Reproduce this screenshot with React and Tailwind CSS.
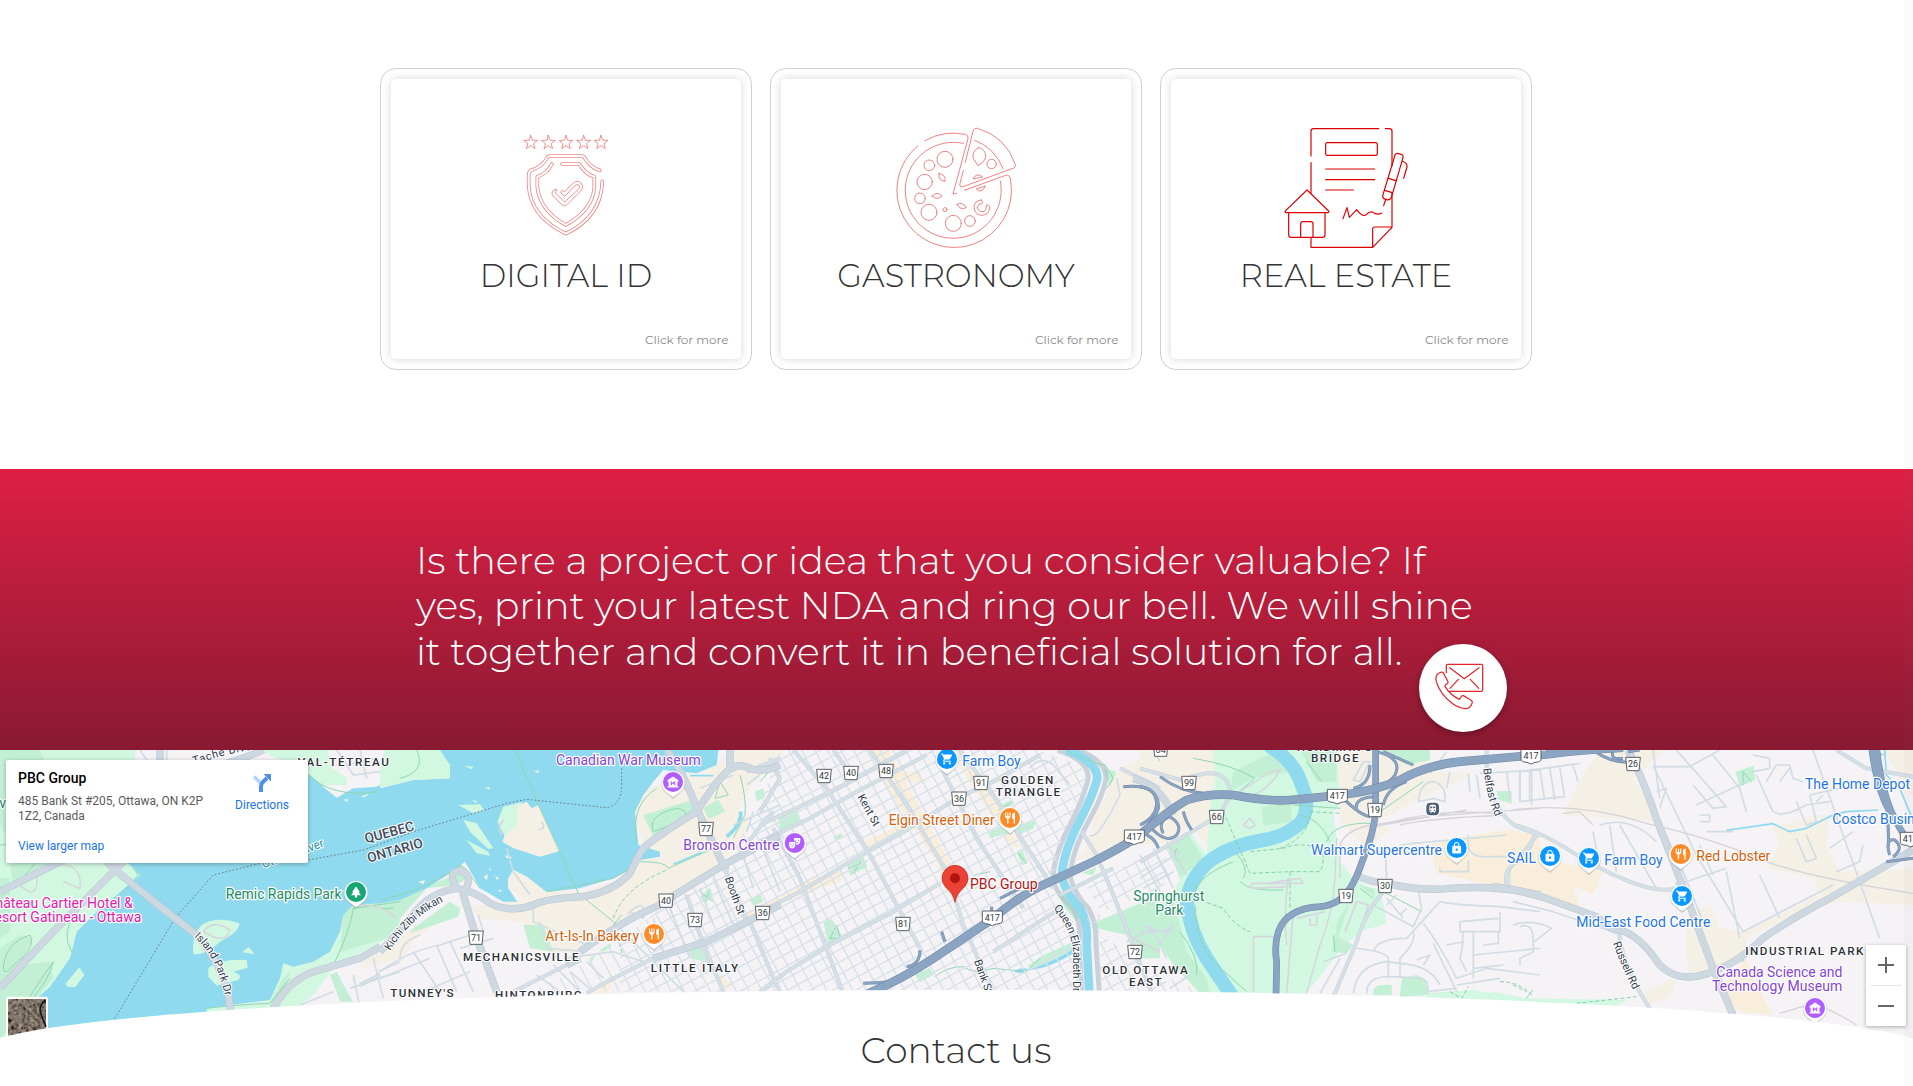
import React from 'react';
import { MdShoppingCart, MdRestaurant, MdMuseum, MdTheaterComedy, MdPark, MdTrain, MdLock } from 'react-icons/md';

/* ---------- service icons ---------- */

const star = (cx) => {
  let d = '';
  for (let i = 0; i < 10; i++) {
    const r = i % 2 ? 9 : 22;
    const a = (-90 + i * 36) * (Math.PI / 180);
    d += `${i ? 'L' : 'M'}${(cx + r * Math.cos(a)).toFixed(1)} ${(248 + r * Math.sin(a)).toFixed(1)}`;
  }
  return d + 'Z';
};

function ShieldIcon() {
  const shapes = [
    'M689 331Q660 322 643 292Q640 288 636 288H541Q534 288 531 294Q516 322 482 331Q477 334 476 345V375Q480 470 588 521Q694 470 697 364',
    'M546 312Q530 342 502 350V380Q508 450 587 495Q668 450 673 382V350Q645 342 628 312H576',
  ];
  return (
    <svg viewBox="408 204 360 360" className="block size-[120px] overflow-visible" fill="none" strokeLinejoin="round" strokeLinecap="round">
      {[482, 535, 588, 641, 693].map((x) => <path key={x} d={star(x)} stroke="#ee8080" strokeWidth="2.6" />)}
      {shapes.map((d) => (
        <g key={d}>
          <path d={d} stroke="#ef8686" strokeWidth="11" />
          <path d={d} stroke="#fff" strokeWidth="6" />
        </g>
      ))}
      <path d="M559 389Q552 385 547 396Q544 402 549 407L575 434Q583 441 591 434L635 390Q642 380 634 370Q622 358 610 369L584 395L577 391Q570 395 573 399L584 409L614 378Q621 370 627 376Q633 381 626 387L584 426L556 399Q560 394 559 389Z" stroke="#ee8080" strokeWidth="2.6" />
    </svg>
  );
}

function PizzaIcon() {
  return (
    <svg viewBox="409 204 360 360" className="block size-[120px] overflow-visible" fill="none" stroke="#ec7474" strokeWidth="2.7" strokeLinecap="round" strokeLinejoin="round">
      <path d="M475 257A172 172 0 1 0 753 362Q752 343 738 346L614 391M496 242Q550 210 618 223Q627 226 625 236L580 402L590 400" />
      <path d="M611 250A144 144 0 1 0 722 363" />
      <path d="M617 307L640 214Q643 203 654 205Q740 231 767 314Q769 321 762 324L610 380Q598 382 601 370L611 332" />
      <path d="M645 241Q704 262 731 327" />
      <circle cx="556" cy="298" r="24" /><circle cx="509" cy="316" r="16" /><circle cx="495" cy="366" r="23" />
      <circle cx="481" cy="415" r="16" /><circle cx="508" cy="457" r="24" /><circle cx="581" cy="490" r="24" />
      <circle cx="631" cy="483" r="16" /><circle cx="696" cy="312" r="14" /><circle cx="556" cy="449" r="6" />
      <path d="M656 263Q635 275 641 296L655 317Q684 300 677 280Q670 263 656 263ZM538 340Q560 345 556 364Q535 362 538 340ZM517 408Q533 392 547 408Q533 422 517 408ZM592 433Q610 424 620 443Q602 452 592 433Z" />
      <path d="M641 356Q650 336 668 350ZM651 388Q664 403 677 379ZM665 420Q642 422 643 444Q647 466 667 466Q690 464 690 440Q686 430 679 437Q682 455 667 455Q653 453 653 441Q655 431 667 431Q671 424 665 420Z" />
    </svg>
  );
}

function EstateIcon() {
  return (
    <svg viewBox="408 204 360 360" className="block size-[120px] overflow-visible" fill="none" stroke="#dd0000" strokeWidth="3.6" strokeLinecap="round" strokeLinejoin="round">
      <path d="M483 288V214Q483 206 491 206H686M706 206H718Q726 206 726 214V318M726 398V502L668 562H483V533M483 308V400M726 501H674Q668 501 668 507V562" />
      <rect x="527" y="248" width="155" height="38" rx="5" />
      <path d="M527 327H674M527 359H674M527 390H610" />
      <path d="M471 390L536 453Q538 458 532 458H409Q403 457 407 452ZM416 458V524Q416 532 424 532H517Q525 532 525 524V458M452 532V492Q452 485 459 485H482Q489 485 489 492V532" />
      <path d="M579 476L591 443L598 472L620 449Q640 477 653 460Q665 451 674 460Q685 465 695 459" />
      <path d="M743 280L756 284Q761 287 759 293L724 413Q718 422 710 419L702 416Q696 411 699 404L735 285Q738 279 743 280ZM716 355L737 362M704 391L727 398M707 418L701 437M756 303Q773 309 771 321L761 355" />
    </svg>
  );
}

function ContactIcon() {
  return (
    <svg viewBox="0 0 264 264" className="absolute inset-0 size-[88px]" fill="none" stroke="#e8272c" strokeWidth="3.8" strokeLinecap="round" strokeLinejoin="round">
      <g transform="translate(-27 -27)">
        <path d="M109 113V92Q109 88 113 88H214Q218 88 218 92V164Q218 169 213 169H117M119 98L163 131L207 98M145 133L120 160M181 133L206 160" />
        <path d="M99 112Q91 110 85 116Q75 122 79 140Q90 177 126 205Q145 219 165 221Q180 222 185 207Q190 200 182 195L160 182Q155 181 153 186L148 193Q121 180 107 157Q103 153 108 148Q117 145 113 138Z" />
      </g>
    </svg>
  );
}

/* ---------- map ---------- */

const OFFSET = { A: 0, B: 1140, C: 2280, D: 3420, E: 4539 };
const SHEETS = Object.keys(OFFSET);

// One style applied to the outlines of every map sheet.
function Layer({ A, B, C, D, E, ...rest }) {
  const data = { A, B, C, D, E };
  return (
    <g fill="none" strokeLinejoin="round" {...rest}>
      {SHEETS.filter((k) => data[k]).map((k) => <path key={k} d={data[k]} transform={`translate(${OFFSET[k]} 0)`} />)}
    </g>
  );
}

function Sheet({ k, children }) {
  return <g transform={`translate(${OFFSET[k]} 0)`}>{children}</g>;
}

function Road({ edge, fill, w, ...paths }) {
  return (
    <>
      <Layer {...paths} stroke={edge} strokeWidth={w + 3} />
      <Layer {...paths} stroke={fill} strokeWidth={w} />
    </>
  );
}

const PARK = '#228b62';
const SHOP = '#2474e5';
const FOOD = '#d4610c';
const CULT = '#8544d4';

function Poi({ x, y, w, c, children, end }) {
  return (
    <text x={x} y={y} textLength={w} textAnchor={end ? 'end' : 'start'} fill={c} fontSize="42" stroke="#fff" strokeWidth="7" strokeLinejoin="round" paintOrder="stroke">{children}</text>
  );
}

function Area({ x, y, w, children }) {
  return (
    <text x={x} y={y} textLength={w} fill="#2c3038" fontSize="35" fontWeight="500" stroke="#fff" strokeWidth="6" strokeLinejoin="round" paintOrder="stroke">{children}</text>
  );
}

function Street({ id, d, w, children, size = 33, c = '#2f3a4e' }) {
  return (
    <>
      <path id={id} d={d} fill="none" />
      <text fill={c} fontSize={size} stroke="#fff" strokeWidth="6" strokeLinejoin="round" paintOrder="stroke">
        <textPath href={`#${id}`} textLength={w}>{children}</textPath>
      </text>
    </>
  );
}

function Shield({ x, y, n, wide }) {
  const h = wide ? 30 : 22;
  return (
    <g transform={`translate(${x} ${y})`}>
      <path d={wide ? `M${-h} -20H${h}V10Q${h} 18 12 19L0 24L-12 19Q${-h} 18 ${-h} 10Z` : 'M-22 -20H22L18 20H-18Z'} fill="#fff" stroke="#5c5f66" strokeWidth="3" strokeLinejoin="round" />
      <text y="10" textAnchor="middle" fontSize="27" fill="#33373d">{n}</text>
    </g>
  );
}

function Pin({ x, y, c, Icon }) {
  return (
    <g transform={`translate(${x} ${y})`}>
      <path d="M0 48L-22 29A36 36 0 1 1 22 29Z" fill="#8a929c" opacity=".45" transform="translate(0 3)" />
      <path d="M0 46L-22 29A35 35 0 1 1 22 29Z" fill="#fff" />
      <circle r="30" fill={c} />
      <Icon x="-20" y="-20" size="40" color="#fff" />
    </g>
  );
}

// Parallel streets of the downtown grid, cut to the built-up area.
const GRID = (() => {
  let d = '';
  for (let i = -30; i < 44; i++) {
    const x = i * 39;
    d += `M${x} 0L${x + 430} 800`;
  }
  for (let i = -3; i < 42; i++) {
    const y = i * 37;
    d += `M-420 ${y + 232}L1220 ${y - 660}`;
  }
  return d;
})();

function CityMap() {
  return (
    <svg viewBox="0 15 5739 870" className="block h-[290px] w-full" fontFamily="Roboto, sans-serif" role="img" aria-label="Map of Ottawa">
      <defs>
        <clipPath id="downtown"><path d="M-690 740L-600 700-440 600-270 470-110 370 0 180 60 15H830L960 60 980 100 900 300 880 420 900 480 950 540 960 740Z" /></clipPath>
        <clipPath id="east"><path d="M980 420L1140 340 1240 290 1260 370 1200 430 980 520 1010 560 1200 690 1330 740H1020V500Z" /></clipPath>
        <filter id="terrain" x="0" y="0" width="1" height="1">
          <feTurbulence type="fractalNoise" baseFrequency=".09" numOctaves="4" seed="7" />
          <feColorMatrix values=".5 .3 0 0 -.2 .45 .3 0 0 -.21 .36 .3 0 0 -.2 0 0 0 0 1" />
        </filter>
      </defs>
      <rect y="15" width="5739" height="870" fill="#f5f3f5" />

      {/* land cover */}
      <Layer fill="#f5f0e6"
        B="M-60 660L100 545 240 480 330 480 500 450 600 440 760 390 790 300 760 200 790 140 850 110 870 75 960 90 1010 60 1050 15H1200V50L1120 110 1080 190 1110 250 1030 350 900 435 830 480 700 560 600 610 600 625 500 620 430 530 300 520 260 480 200 510 100 590 60 660 0 730-60 740Z"
        C="M0 15H70V30L0 50ZM970 320L1010 200 1080 70 1200 15V250L1010 330 940 350Z"
        D="M0 15H225L230 100 210 310 150 240 100 290 0 300ZM590 15H870V80L1000 85 820 170 700 240 760 250 680 310 600 230Z"
        E="M260 15H460L360 100 400 160 440 230 150 210 210 90ZM780 250L900 210H950L940 300 980 380 1200 370V480L980 470 860 500 700 580 690 650 600 690 530 700 515 600 530 500 590 480 620 550 700 560 920 450 900 400 760 370 800 290ZM1110 15L1200 160V15ZM380 750L500 690 470 760 400 780Z" />
      <Layer fill="#f8eedb"
        B="M1090 510L1200 470V490L1110 530 1150 600 1100 520ZM1020 690L1060 720 1030 745ZM650 745L690 690 700 710 680 745Z"
        C="M0 485L90 440 150 400 250 380 240 410 120 450 0 510ZM330 15H385L420 80 480 80 490 110 440 110 480 190 560 330 600 430 560 450 530 350 380 130ZM540 15H610L720 190 780 310 750 300 590 50ZM310 290L420 240 430 255 330 320Z"
        D="M865 300L1000 270 1100 255 1200 270V430L1050 420 890 385Z"
        E="M-60 260L0 255 60 270 40 320 90 340 270 380 240 450 180 420 200 490 0 430-60 420ZM620 730L700 640 720 700 780 810 680 800Z" />
      <Layer fill="#d2f8e2"
        A="M0 15H420V100L350 90 390 350 420 390 350 450 290 500 230 560 210 640 150 725 110 760 140 880H0ZM780 15H1040V120L960 120 924 85ZM1200 470L1130 470 1060 480 1030 510 1020 560 990 620 940 650 880 665 850 655 840 700 810 765 690 780 620 790V820H890L1000 670 1200 560Z"
        D="M220 15H590L600 180 580 200 600 350 640 400 690 430 720 430 740 535 660 560 590 630 500 745H180L100 640 60 560 100 440 130 380 100 290 150 260 200 330 210 200 225 100ZM860 745L1000 735 1200 770H860Z"
        E="M-60 740L40 760 340 765 300 790-60 780Z" />
      <Layer fill="#c3f0d5"
        A="M0 15H120L140 60 30 290 0 240ZM30 350L190 345 160 370 40 430ZM0 610L60 570 100 580 60 660 150 650 160 700 110 760 0 880ZM0 400H30V560L0 580ZM1200 470L1130 470 1060 480 1030 510 1020 620 1160 580 1200 530ZM990 690L1020 770H1060L1010 680ZM810 770L850 700 870 680 860 720 820 780Z"
        B="M0 470L60 460 210 395 240 350 270 395 230 420 140 430 0 590ZM100 550L210 470 240 490 235 515 90 565ZM430 540L490 540 520 620 450 610ZM790 210L935 165 945 200 820 275ZM970 190L1015 163 1035 200 985 222ZM960 455L990 428 1000 455 975 475ZM1110 465L1140 445 1150 470 1120 482ZM930 615L975 600 990 655 935 640ZM1125 140L1150 130 1155 155 1130 170ZM660 615L690 595 695 605 665 622ZM630 640L650 625 630 660Z"
        C="M55 215L115 195 120 240 60 255ZM260 355L310 335 322 365 270 392ZM190 530L215 522 248 575 205 600ZM685 262L735 240 745 265 690 280ZM770 240L830 225 820 250 775 270ZM715 185L760 160 750 185ZM770 320L785 312 803 355 785 360ZM465 690L510 668 520 690 480 712ZM800 665L850 630 940 590 945 610 830 670ZM1030 70L1070 80 1050 125ZM1010 530L1140 475 1200 470V640L1140 640 1100 570 1010 550ZM965 385L1010 365 1000 390ZM895 450L920 450 960 500 950 530 915 490ZM220 275L245 265 248 275 225 285Z"
        D="M280 80L410 15 450 80 340 100 270 140ZM365 185L455 175V230L370 242ZM480 15H590V110L530 110ZM590 530L630 470 580 620ZM0 480L90 440 120 540 140 620 200 700 210 745 180 745 100 660 60 600 0 640ZM80 300L140 260 190 340 120 400ZM720 15H870V45L800 60ZM1070 138H1115V175L1075 165ZM700 740Q700 715 755 720V750H700ZM780 755L785 700 830 690Q865 700 862 750ZM585 570L640 600 620 625 575 620ZM655 420L700 430 705 455Z"
        E="M668 80L722 62 727 105 680 125Z" />
      <Layer fill="#f4f2f5" A="M405 15H520V45H405ZM985 15H1130L1137 100 1060 112 990 65ZM890 790L950 740 1000 715 1020 770ZM1020 700L1060 680 1200 640V790L1070 790Z" />

      {/* water and islands */}
      <Layer fill="#8fdaee"
        A="M924 85L975 130 1010 158 1060 130 1130 125 1141 120V475L1060 480 1030 510 1020 560 990 620 940 650 880 665 850 655 840 700 810 765 690 780 620 790V860H140L110 760 150 725 210 640 230 560 290 500 350 450 420 390 380 350 350 90Z"
        B="M0 130L100 105 210 100 205 60 160 40 180 15H1015L1010 60 950 85 850 75 820 110 790 150 765 200 775 300 840 320 840 335 780 345 760 370 700 400 600 430 500 442 440 395 400 375 385 400 385 430 412 470 370 470 300 430 255 350 210 385 140 430 60 465 0 475Z"
        C="M762 680Q780 665 805 672Q850 665 940 612L945 622Q870 670 810 675Q780 690 762 680Z" />
      <Layer fill="#d2f8e2"
        A="M600 545Q640 510 718 535Q720 560 660 590Q620 630 580 628Q575 570 600 545ZM625 670Q660 640 740 645L743 668 700 680Q730 690 715 705L650 722 625 695ZM198 715L238 667 253 690 225 727 200 725ZM727 622L745 606 765 628ZM1030 165L1043 160V172ZM1080 155L1110 145 1095 157Z"
        B="M235 180L300 178 312 195 280 205ZM250 225L290 235 340 310 325 312 270 260ZM260 285L325 320 330 332 290 325ZM370 185L425 172 410 240 375 275 352 230ZM315 128L330 126 328 135ZM252 62L280 65 275 73ZM275 165L292 168 288 175ZM15 15H180L210 60V100L100 105 0 130V60Z" />
      <Layer fill="#f5f0e6"
        B="M415 180L440 170 455 190 475 180 540 318 480 335 400 310 367 290 375 270 410 240ZM400 375L440 395 500 442 600 435 500 462 450 470 385 430 385 400ZM115 410L135 405 130 418ZM462 78L477 76 475 85ZM310 395L325 388 320 405ZM325 372L332 370V378ZM355 435L368 435 360 442ZM375 330L400 338 380 340ZM345 392L358 400 350 404Z" />
      <Layer stroke="#a9b6c6" strokeWidth="15" C="M893 15Q985 45 985 100Q970 160 935 230Q885 320 878 400Q885 440 940 495Q965 530 957 600L965 740M955 15Q1040 50 1038 100Q1030 150 985 230Q935 320 930 395Q945 450 985 490Q1010 530 1008 600L1018 740" opacity=".55" />
      <Layer stroke="#8fdaee" strokeWidth="26" C="M920 15Q1012 50 1012 100Q1000 150 960 225Q910 320 905 395Q920 450 960 490Q985 530 980 600L988 745" />
      <Layer stroke="#8fdaee" strokeWidth="42" D="M385 0Q465 50 485 120Q512 180 485 230Q440 275 370 285Q280 300 220 340Q150 390 140 470Q150 560 200 640Q240 700 278 755" />
      <Layer stroke="#8fdaee" strokeWidth="5" B="M930 92H1000M880 358L965 322" E="M640 256L780 236 830 260 880 250 960 210 1000 200 1095 195M1115 15L1120 90 1160 130 1200 225M1080 25L1120 30" />
      <Layer stroke="#8fdaee" strokeWidth="11" B="M1082 200Q1085 240 1040 275" />

      {/* trails, borders and rail */}
      <Layer stroke="#8fd6b3" strokeWidth="3"
        A="M0 300Q80 290 110 350L50 420M10 660Q20 590 90 570Q110 610 40 660Q10 700 10 660ZM230 500Q180 560 215 620M30 860Q80 760 160 650Q150 700 90 770M400 370L415 390 350 460M1000 660Q1050 560 1060 490L1200 470M620 790Q700 780 810 775L870 700M925 90Q1000 160 1130 140"
        B="M0 465Q120 440 215 380Q245 340 270 390L300 430M405 15L480 190 595 445 700 530 910 740M770 290Q750 180 830 130M780 350Q860 350 865 370L1000 310M500 440L700 400 775 355M1020 110L1045 150 1005 160ZM1080 90Q1100 160 1095 210L1060 280M820 260Q800 210 890 190Q940 200 900 230ZM960 440L1000 470M990 435L975 470M700 540L725 510M0 490H40M110 15Q140 80 60 100"
        C="M525 695Q560 665 610 665Q640 690 700 670L800 680 840 640M915 15Q1010 60 1035 60L1060 100 1040 130M210 580L230 540 240 580ZM265 370L318 350M280 385L305 345M0 60L40 65 0 110M645 390L690 380M715 195L760 170M775 325L800 355M940 560V620"
        D="M160 40Q280 60 345 100L250 180M300 410Q330 440 430 435M285 320Q330 370 310 400M160 480Q150 400 280 350M165 480Q170 600 220 650L320 740M570 290Q540 220 480 210M460 180L600 190M110 310Q95 340 120 350M120 560Q180 640 170 690M730 440L845 500M500 50L545 110M580 570L585 620M720 200L850 110M660 430L700 460M560 290Q580 230 700 235"
        E="M40 760L60 735M690 120V80L715 110M690 620V650" />
      <Layer stroke="#86cfae" strokeWidth="3" strokeDasharray="12 7"
        B="M700 520Q730 430 860 375M700 540L730 635"
        D="M250 200L330 385 450 380H540Q560 340 540 310Q480 290 430 310L330 320M420 310Q500 280 510 210M450 380V490M165 460L250 490Q280 540 330 560M1080 710Q1140 710 1180 755M510 200L600 205M930 740L965 760 985 725"
        E="M0 720L40 740M190 775L370 755" />
      <Layer stroke="#6e7f8c" strokeWidth="3" strokeDasharray="5 6" A="M345 820L525 520 640 390 780 355 924 345 1090 315 1141 297" B="M0 297L100 260 380 175 440 163 680 188Q725 180 725 120V60" />
      <Layer stroke="#d6d3d9" strokeWidth="4" D="M590 280L585 400Q580 500 540 600L500 745M600 400V300Q620 250 700 240L860 215 1200 190M740 235Q900 190 1060 205M700 245L980 195M780 240Q860 220 1100 210M440 600Q430 500 445 400" E="M0 195Q200 170 400 235Q600 280 760 350Q900 400 1200 445M150 205L200 200 240 240M800 805L900 775Q970 800 1030 840" A="M60 420Q120 480 110 370M160 360Q250 350 240 430L190 410" />
      <Layer stroke="#d8d5df" strokeWidth="5" D="M340 575L340 745M335 415H380L480 400 490 415H340Q320 430 345 430L440 425M340 575H415M460 500L440 745M470 520L555 500M510 520V540H530V505M615 560L650 470 685 480 660 560M310 240L330 220 345 240 330 250ZM270 160Q330 120 390 80L420 75Q390 130 340 150" C="M1100 590L1180 550M1110 575L1200 620" A="M610 560Q640 520 690 555Q680 590 640 575ZM1080 480Q1150 480 1190 520" B="M485 230Q500 250 475 255M365 270Q350 240 372 225" />

      {/* minor streets */}
      <g transform="translate(2280 0)" fill="none" stroke="#d7e1e8" strokeWidth="4">
        <g clipPath="url(#downtown)"><path d={GRID} /></g>
        <g clipPath="url(#east)"><path d={GRID} /></g>
      </g>
      <Layer stroke="#d1dce4" strokeWidth="5"
        A="M500 15V45M420 15L440 45M1010 15L1060 90 1140 80M1080 15L1100 100M1040 60L1130 40M1060 690L1080 790M1120 640L1150 760M1050 730L1200 680M1135 680L1200 650M900 780L1000 740"
        B="M0 680Q80 620 180 600L300 560M60 640Q60 590 120 570M270 500L360 740M295 510L310 560M100 620L180 740M170 600L230 740M210 590L280 740M240 610L340 580M0 700L150 640M130 740L270 680M480 530L500 610 620 620M460 470V530L620 600M550 640L700 620 790 650M570 680L640 740M520 660L600 740M620 650L670 700M470 690L540 740M820 520L850 620M870 490L930 640M960 430L1000 540M1000 400L1060 540M1140 290L1200 440M1090 330L1120 430M380 310L400 380 450 450M1100 120L1140 90M1120 200L1100 260M740 510Q800 450 790 520L750 500M1060 240L1200 180M960 130L1060 90"
        C="M990 270Q1010 290 1080 150L1070 100M810 70Q840 30 880 60L930 120M1180 15L1200 50"
        D="M0 350L130 280M0 400L120 320M10 430L100 380M0 330L60 440M40 310L100 430M80 290L140 390M10 545L70 560 100 540 60 600M0 560H100M30 540L80 640M90 730L150 690M640 105L670 50 690 50 660 110ZM780 300L820 295 1100 270M735 300L740 400M985 270V310Q1000 340 1050 335H1100M900 380H985V345M900 370V382M835 170Q840 110 880 110Q920 120 915 170L880 160ZM1020 85L1200 75M1100 80L1110 165M1140 75V170M1175 70V180M985 85L990 140M1010 90L1020 160M930 80L920 130M870 85L920 20M640 745Q650 660 740 650L780 655Q870 660 900 720M680 745Q680 690 760 695L845 700Q870 710 862 745M745 700V640Q740 620 650 610M780 695V640Q830 590 820 560M700 620Q710 580 800 580L900 470Q940 480 1080 485L1200 500M700 480L820 545 845 490 835 440M740 460L790 520M770 450L740 480M800 490L780 510M850 535Q900 600 950 700M880 595L950 740M920 600L970 590 960 640 980 680M960 530V560H1080V500M960 530L1075 520M970 560L965 620M1000 560V700M1000 630L1200 610M1030 600L1075 595V560M1000 670L1090 660M950 700L1040 670 1200 690M950 720L1080 700M1140 545Q1180 530 1180 590V620L1140 640V660M860 740L950 730M830 645L870 630 850 660M1110 420Q1100 360 1140 350M550 650L620 625M540 745L600 640"
        E="M20 80V170M50 75V170M80 70L95 165M110 65L125 165M140 62L155 160M180 60L195 110M20 170L150 155M20 80L200 55M420 65H530L620 15M420 60L550 330M490 15L640 185 600 190 540 120M550 180L700 110M600 30L680 130 700 200M720 80L770 70 770 40 720 30M730 90L780 200Q810 220 880 180L950 170M760 110L790 60H830L840 100 870 110M800 110L830 70M850 170L880 240 910 230 890 150M900 15L1100 580M890 150L980 130M910 170L930 150M580 260H660M560 210H590V230H560M550 330L690 560 960 420M490 330L570 530M490 420L640 370M560 300L600 390M640 380L680 580M740 390L800 520M430 210L520 400M850 280L880 350 910 340 880 270M950 310L1020 260M970 380L1040 350 1050 300M260 240Q350 210 430 290M240 260L260 370M290 240L310 380M320 240L430 430M420 15L440 160M430 140L460 130 440 190M0 470L120 500 300 560M0 540Q60 520 115 550Q90 570 65 590 60 570M60 590L240 600 300 570M15 540V600L50 640 30 660M90 655H300M60 740L85 655M120 740L140 640M190 740L200 635M250 740L280 630M50 740L320 720M40 760H300M160 530L170 570 250 560M200 490L430 570M270 430L440 500 400 540M250 450L350 500M330 660L400 750M370 620L410 680 380 690M410 740L460 710 480 740 430 765M830 540L1000 780 1060 770M870 510L940 610M920 510L1010 600 1000 520M960 490L1050 610M1060 480L1140 570 1040 600M1100 480L1150 560M820 600L900 560M560 690L580 660M690 650L830 560 1050 470M550 800L600 770 640 775M580 790L590 810M1160 60V15M1160 60L1200 30M1140 430V460" />

      {/* arterials */}
      <Road edge="#c6d1dc" fill="#d5dfe6" w={9}
        B="M560 660L400 740M-60 720L0 690M920 450L960 570 1030 740M1110 530L1180 700 1200 740M1040 350V380M1000 300L1060 430 1100 530M1100 300Q1140 240 1180 200M620 745L680 710 820 640M1100 80L1200 40"
        C="M0 240L130 180 250 120 440 15M0 290L150 220 290 140 500 30M0 500L120 440 270 350 440 255 590 160 700 110 840 30M0 740L80 680 210 600 400 500 540 415M40 250L120 400 250 745M100 15L200 130 330 330 480 610M330 15L440 180 560 380 610 540 700 745M550 80L650 280 790 490M600 15L720 180 880 430M965 260L1010 330 1060 450 1175 745M220 15L280 100M0 200L60 100 30 40M900 450L1060 370M700 620L900 490M1080 70L1200 130"
        D="M0 350L240 210 270 150Q270 80 200 85L150 95M0 70L140 110M740 430Q680 490 650 590L580 755M1040 15V90Q1060 200 1130 245L1200 270M1100 420Q1090 370 1130 350L1190 270"
        E="M0 240Q60 250 160 310Q250 370 350 410Q440 445 490 430M65 270L45 320M320 560V590Q350 700 410 790M970 15L1060 70 1200 95M490 420L510 400" />
      <Road edge="#b9c5d2" fill="#cdd8e1" w={19}
        A="M0 730L150 570 345 375 400 320M0 440L180 350 290 300M320 350L345 375 500 500 590 570Q680 670 692 800M815 800Q860 710 940 680L1080 640 1141 605M480 15V45M660 60Q720 45 790 15"
        B="M0 620Q60 560 110 495Q160 440 230 430Q290 440 330 475Q390 505 460 480Q500 460 610 455Q700 440 750 385Q770 340 790 310Q820 280 950 200Q1000 120 1040 80Q1070 50 1110 70Q1150 85 1200 60M230 430Q200 380 240 378Q285 385 250 450L290 580 350 740M860 15Q910 80 950 190L1030 360M600 620Q740 520 830 485L900 440 1040 355 1200 270M560 660L600 640M820 640L980 590 1100 530 1200 480M1050 15V80"
        D="M650 390Q680 410 740 415Q850 440 930 430Q1080 420 1200 450M-20 100Q60 120 100 210"
        E="M-60 425Q0 430 100 460L250 515Q300 560 320 555Q380 570 440 660Q500 720 600 680Q680 650 750 580Q820 530 950 460L1200 315M345 15Q390 100 430 220L500 400 600 670 660 810" />

      {/* freeways */}
      <Road edge="#7089ab" fill="#8aa4c1" w={6}
        C="M310 715Q400 712 430 700M440 665Q480 660 480 615M720 460L780 430M555 590L545 560M1090 125Q1200 115 1195 190Q1180 240 1120 270M1160 270Q1185 280 1195 310M695 505V485"
        D="M0 125Q50 130 50 180Q45 220 0 240M30 245Q80 300 110 270Q130 240 90 215Q50 230 70 265M130 200Q135 225 155 255M60 95Q120 140 190 145M710 20Q790 40 765 90Q740 125 700 130M610 160Q660 210 690 215M700 155Q640 160 650 195M690 60Q690 120 640 130M730 180Q740 130 800 110M730 20L820 60"
        E="M240 15Q300 60 370 50M300 20Q290 45 330 40M345 20L380 15M1130 330Q1115 280 1145 285Q1175 310 1140 335M1120 200Q1130 260 1125 310M1120 350L1200 340" />
      <Road edge="#7089ab" fill="#8aa4c1" w={17} D="M707 15V200Q700 270 670 340Q650 400 630 430Q600 480 540 485Q440 490 415 560Q402 600 410 650L408 755" E="M1090 0Q1105 150 1150 230Q1180 290 1210 300M1075 0Q1090 130 1130 200" />
      <Road edge="#7089ab" fill="#8aa4c1" w={23}
        C="M320 748Q430 700 520 640L700 520Q780 450 860 415L1000 350Q1080 310 1142 270"
        D="M0 270Q80 200 140 165Q200 145 280 150Q380 170 450 165Q560 155 600 150Q700 140 780 105Q860 60 960 50L1120 36"
        E="M0 36L100 28Q200 15 330 8" />

      {/* labels */}
      <Sheet k="A">
        <Poi x={18} y={188} c={PARK} end>av</Poi>
        <Street id="tache" d="M480 100Q620 35 780 10" w={290}>Pierre-Taché Blvd</Street>
        <Street id="ottawa-river" d="M790 370L985 300" size={36} c="#2791ab" w={195}>Ottawa River</Street>
        <Area x={893} y={63} w={274}>VAL-TÉTREAU</Area>
        <text transform="translate(1098 295) rotate(-15)" textLength="152" fontSize="41" fontWeight="500" fill="#42495c" stroke="#fff" strokeWidth="6" paintOrder="stroke">QUEBEC</text>
        <text transform="translate(1106 353) rotate(-16)" textLength="172" fontSize="41" fontWeight="500" fill="#42495c" stroke="#fff" strokeWidth="6" paintOrder="stroke">ONTARIO</text>
        <Poi x={677} y={462} w={348} c={PARK}>Remic Rapids Park</Poi>
        <Poi x={398} y={489} c="#e619ad" end>Château Cartier Hotel &amp;</Poi>
        <Poi x={424} y={531} c="#e619ad" end>Resort Gatineau - Ottawa</Poi>
        <Street id="island-park" d="M582 575Q655 640 676 760" w={204}>Island Park Dr</Street>
        <Pin x={1068} y={441} c="#17a673" Icon={MdPark} />
      </Sheet>
      <Sheet k="B">
        <Poi x={528} y={60} w={434} c={CULT}>Canadian War Museum</Poi>
        <Poi x={910} y={315} w={288} c={CULT}>Bronson Centre</Poi>
        <Poi x={496} y={588} w={281} c={FOOD}>Art-Is-In Bakery</Poi>
        <Area x={249} y={648} w={347}>MECHANICSVILLE</Area>
        <Area x={812} y={682} w={262}>LITTLE ITALY</Area>
        <Area x={31} y={756} w={190}>TUNNEY'S</Area>
        <Area x={345} y={762} w={260}>HINTONBURG</Area>
        <Street id="kichi" d="M30 618Q90 520 192 468" w={222}>Kichi Zībī Mīkan</Street>
        <Street id="booth" d="M1034 400L1076 514" w={118}>Booth St</Street>
        <Shield x={978} y={252} n="77" /><Shield x={288} y={578} n="71" /><Shield x={858} y={467} n="40" />
        <Shield x={945} y={525} n="73" /><Shield x={1148} y={504} n="36" />
        <Pin x={879} y={111} c="#b15dff" Icon={MdMuseum} />
        <Pin x={822} y={567} c="#ff8a26" Icon={MdRestaurant} />
      </Sheet>
      <Sheet k="C">
        <Poi x={607} y={63} w={175} c={SHOP}>Farm Boy</Poi>
        <Area x={723} y={117} w={157}>GOLDEN</Area>
        <Area x={707} y={153} w={193}>TRIANGLE</Area>
        <Poi x={386} y={241} w={318} c={FOOD}>Elgin Street Diner</Poi>
        <Poi x={630} y={432} w={203} c="#b31412">PBC Group</Poi>
        <Area x={1027} y={688} w={256}>OLD OTTAWA</Area>
        <Area x={1107} y={724} w={98}>EAST</Area>
        <Poi x={1120} y={468} w={213} c={PARK}>Springhurst</Poi>
        <Poi x={1186} y={510} w={84} c={PARK}>Park</Poi>
        <Street id="kent" d="M292 155L343 248" w={104}>Kent St</Street>
        <Street id="queen" d="M880 490Q942 560 940 640V760" w={288}>Queen Elizabeth Driv</Street>
        <Street id="bank" d="M642 648L684 765" w={106}>Bank St</Street>
        <Shield x={192} y={93} n="42" /><Shield x={273} y={84} n="40" /><Shield x={378} y={78} n="48" />
        <Shield x={663} y={114} n="91" /><Shield x={597} y={161} n="36" /><Shield x={429} y={537} n="81" />
        <Shield x={1125} y={621} n="72" />
        <Shield x={697} y={518} n="417" wide /><Shield x={1123} y={275} n="417" wide />
        <Pin x={104} y={294} c="#b15dff" Icon={MdTheaterComedy} />
        <Pin x={561} y={42} c="#0a97ff" Icon={MdShoppingCart} />
        <Pin x={750} y={219} c="#ff8a26" Icon={MdRestaurant} />
        <path d="M585 472Q580 446 560 430Q546 416 546 400A39 39 0 0 1 624 400Q624 416 610 430Q590 446 585 472Z" fill="#ea4335" stroke="#c5221f" strokeWidth="2" />
        <circle cx="585" cy="400" r="15" fill="#b31412" />
      </Sheet>
      <Sheet k="D">
        <Area x={470} y={17} w={225}>HURDMAN'S</Area>
        <Area x={513} y={52} w={143}>BRIDGE</Area>
        <Poi x={513} y={331} w={393} c={SHOP}>Walmart Supercentre</Poi>
        <Poi x={1101} y={355} w={87} c={SHOP}>SAIL</Poi>
        <Street id="belfast" d="M1030 70Q1040 160 1068 220" w={150}>Belfast Rd</Street>
        <Shield x={62} y={14} n="64" /><Shield x={147} y={114} n="99" /><Shield x={230} y={216} n="66" />
        <Shield x={705} y={195} n="19" /><Shield x={618} y={453} n="19" /><Shield x={735} y={423} n="30" />
        <Shield x={592} y={153} n="417" wide /><Shield x={1173} y={33} n="417" wide />
        <rect x="857" y="171" width="42" height="42" rx="14" fill="#4c6076" stroke="#fff" strokeWidth="4" />
        <MdTrain x={863} y={177} size={30} color="#fff" />
        <Pin x={950} y={309} c="#0a97ff" Icon={MdLock} />
      </Sheet>
      <Sheet k="E">
        <Poi x={876} y={133} w={315} c={SHOP}>The Home Depot</Poi>
        <Poi x={958} y={238} c={SHOP}>Costco Business Centre</Poi>
        <Poi x={274} y={360} w={175} c={SHOP}>Farm Boy</Poi>
        <Poi x={550} y={348} w={222} c={FOOD}>Red Lobster</Poi>
        <Poi x={190} y={546} w={402} c={SHOP}>Mid-East Food Centre</Poi>
        <Area x={697} y={630} w={354}>INDUSTRIAL PARK</Area>
        <Poi x={610} y={697} w={378} c={CULT}>Canada Science and</Poi>
        <Poi x={597} y={739} w={391} c={CULT}>Technology Museum</Poi>
        <Street id="russell" d="M300 595Q320 650 362 738" w={152}>Russell Rd</Street>
        <Shield x={360} y={57} n="26" /><Shield x={1192} y={282} n="417" wide />
        <Pin x={111} y={333} c="#0a97ff" Icon={MdLock} />
        <Pin x={228} y={339} c="#0a97ff" Icon={MdShoppingCart} />
        <Pin x={503} y={327} c="#ff8a26" Icon={MdRestaurant} />
        <Pin x={507} y={453} c="#0a97ff" Icon={MdShoppingCart} />
        <Pin x={906} y={789} c="#b15dff" Icon={MdMuseum} />
      </Sheet>

      {/* satellite thumbnail */}
      <rect x="18" y="755" width="126" height="130" rx="6" fill="#fff" />
      <rect x="24" y="762" width="114" height="120" filter="url(#terrain)" />
      <path d="M135 765Q115 785 122 805T138 845" fill="none" stroke="#14151c" strokeWidth="5" />
      <ellipse cx="2869" cy="915" rx="2925" ry="180" fill="#fff" />
    </svg>
  );
}

/* ---------- page ---------- */

const CARDS = [
  { title: 'DIGITAL ID', Icon: ShieldIcon },
  { title: 'GASTRONOMY', Icon: PizzaIcon },
  { title: 'REAL ESTATE', Icon: EstateIcon },
];

function Card({ title, Icon }) {
  return (
    <a className="block rounded-2xl border border-[#d0d0d0] p-2.5">
      <div className="flex h-[280px] w-[350px] flex-col items-center rounded-[5px] bg-white pt-[49px] shadow-[0_0_10px_rgba(0,0,0,0.16)]">
        <Icon />
        <h3 className="mt-2 text-[32px] leading-10 font-light text-[#333]">{title}</h3>
        <span className="mt-auto mr-[12.5px] mb-[11px] self-end text-xs leading-4 text-[#888]">Click for more</span>
      </div>
    </a>
  );
}

function InfoCard() {
  return (
    <div className="absolute top-[10px] left-[6px] flex h-[103px] w-[302px] justify-between rounded-xs bg-white pt-[10px] pr-[19px] pl-3 font-[Roboto,sans-serif] text-xs shadow-[0_1px_4px_rgba(0,0,0,0.3)]">
      <div>
        <div className="text-sm leading-4 font-medium text-black">PBC Group</div>
        <p className="mt-2 w-[190px] leading-[15px] text-[#5b5b5b]">485 Bank St #205, Ottawa, ON K2P 1Z2, Canada</p>
        <a className="mt-[15px] block leading-[15px] text-[#1a73e8]">View larger map</a>
      </div>
      <a className="flex flex-col items-center pt-1 text-[#1a73e8]">
        <svg viewBox="0 0 18 18" className="block size-[18px]">
          <path d="M1 2.5L7.5 9" stroke="#b7d0f7" strokeWidth="3.6" fill="none" />
          <path d="M8 18V12.5Q8 10 9.8 8.2L14 4" stroke="#4f8fea" strokeWidth="4" fill="none" />
          <path d="M10.5 0H18V7.5Z" fill="#4f8fea" />
        </svg>
        <span className="mt-1.5 leading-[15px]">Directions</span>
      </a>
    </div>
  );
}

export default function App() {
  return (
    <div className="relative h-[1086px] overflow-hidden bg-white font-[Montserrat,Inter,sans-serif]">
      <section className="flex h-[469px] items-start justify-center gap-[18px] pt-[68px] pr-px">
        {CARDS.map((c) => <Card key={c.title} {...c} />)}
      </section>

      <section className="relative h-[281px] bg-linear-to-b from-[#df1f43] to-[#891932] pt-[68.7px] pl-[416px]">
        <p className="w-[1080px] text-[38px] leading-[45.6px] font-light text-white">
          Is there a project or idea that you consider valuable? If yes, print your latest NDA and ring our bell. We will shine it together and convert it in beneficial solution for all.
        </p>
        <button aria-label="Contact" className="absolute top-[175px] left-[1419px] size-[88px] rounded-full bg-white shadow-[0_2px_6px_rgba(0,0,0,0.3)]">
          <ContactIcon />
        </button>
      </section>

      <section className="relative h-[290px] overflow-hidden">
        <CityMap />
        <InfoCard />
        <div className="absolute top-[195px] right-[7px] flex h-[81px] w-10 flex-col items-center justify-between bg-white shadow-[0_1px_4px_rgba(0,0,0,0.3)]">
          <span className="relative flex h-10 w-10 items-center justify-center">
            <span className="h-0.5 w-4 bg-[#666]" />
            <span className="absolute h-4 w-0.5 bg-[#666]" />
          </span>
          <span className="h-px w-[30px] bg-[#e6e6e6]" />
          <span className="flex h-10 w-10 items-center justify-center"><span className="h-0.5 w-4 bg-[#666]" /></span>
        </div>
      </section>

      <section className="relative flex justify-center pr-px">
        <h2 className="-mt-[13px] text-[36px] leading-[46px] font-light text-[#333]">Contact us</h2>
      </section>

      <div className="pointer-events-none absolute top-0 right-0 h-full w-[9px] bg-[#7d7d7d]/4" />
    </div>
  );
}
